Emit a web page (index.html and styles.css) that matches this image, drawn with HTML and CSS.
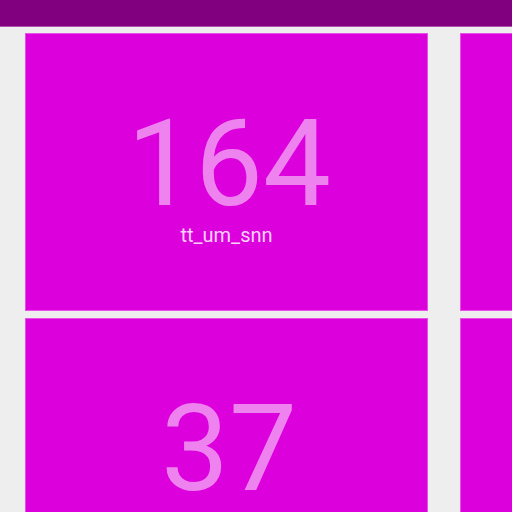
FILE: index.html
```html
<!DOCTYPE html>
<html>
<head>
<meta charset="utf-8">
<link rel="stylesheet" href="styles.css">
</head>
<body>
<header class="topbar"></header>
<main class="grid">
  <div class="card">
    <div class="value">164</div>
    <div class="label">tt_um_snn</div>
  </div>
  <div class="card">
    <div class="value">52</div>
    <div class="label">tt_um_cpu</div>
  </div>
  <div class="card">
    <div class="value">37</div>
    <div class="label">tt_um_test</div>
  </div>
  <div class="card">
    <div class="value">21</div>
    <div class="label">tt_um_pwm</div>
  </div>
</main>
</body>
</html>
```
FILE: styles.css
```css
html, body {
  margin: 0;
  padding: 0;
  background: #eeeeee;
  overflow: hidden;
  height: 512px;
  font-family: Roboto, "Noto Sans", sans-serif;
}
.topbar {
  height: 26px;
  background: #800080;
  border-bottom: 1px solid #b050b0;
}
.grid {
  display: grid;
  grid-template-columns: 403px 403px;
  grid-auto-rows: 278px;
  column-gap: 32px;
  row-gap: 7px;
  padding: 6px 0 0 25px;
  width: 900px;
}
.card {
  background: #dc00dc;
  border: 1px solid #e650e6;
  box-sizing: border-box;
  display: flex;
  flex-direction: column;
  align-items: center;
  padding-top: 70px;
}
.value {
  font-size: 121px;
  line-height: 1;
  color: #ee82ee;
  margin-left: 5px;
}
.label {
  font-size: 20px;
  line-height: 20px;
  color: #fad2fa;
}
```
